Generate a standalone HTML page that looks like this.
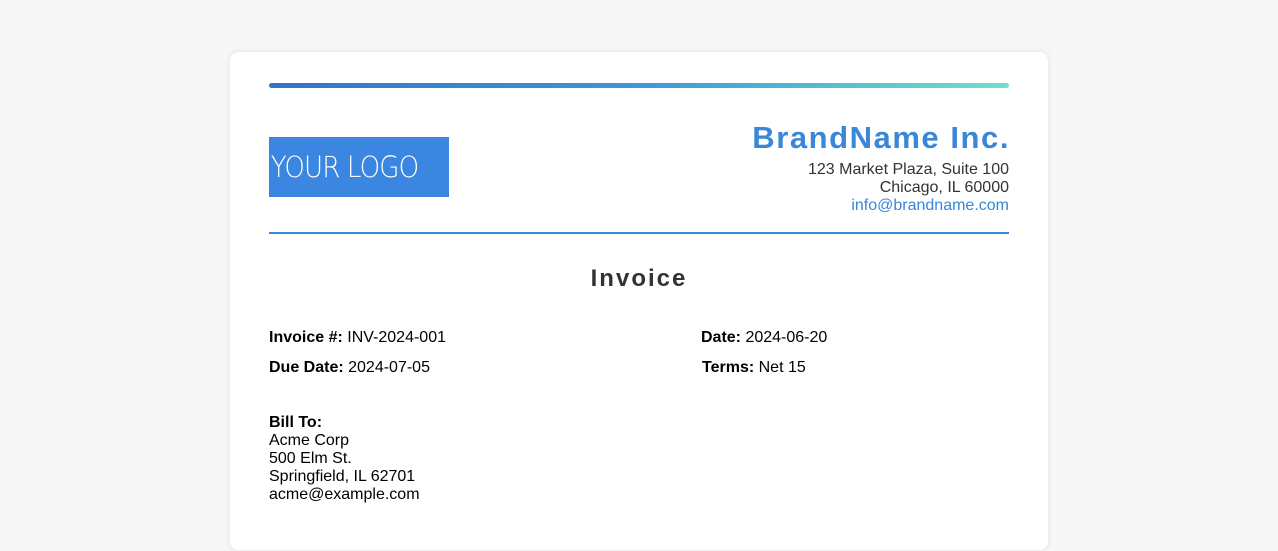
<!DOCTYPE html>
<html><head><style>
html,body{margin:0;height:501px;overflow:hidden;background:#f7f7f7;font-family:"Liberation Sans",Arial,sans-serif;}
.card{box-sizing:border-box;position:absolute;left:229px;top:51px;width:820px;height:500px;background:#fff;border-radius:10px;box-shadow:0 0 6px rgba(0,0,0,0.08);border:1px solid #eee;}
.in{position:absolute;left:39px;top:-1px;width:740px;height:100%;}
.bar{position:absolute;left:0;top:32px;width:740px;height:5px;border-radius:3px;background:linear-gradient(90deg,#3573c9,#3c98d8 50%,#6ee0cc);}
.logo{position:absolute;left:0;top:86px;width:180px;height:60px;background:#3a86e0;color:#fff;font-family:"DejaVu Sans",sans-serif;font-weight:200;font-size:29px;line-height:60px;letter-spacing:-1px;}
.logo span{display:inline-block;transform:scaleX(0.9);transform-origin:left;padding-left:2px;}
.brand{position:absolute;right:0;top:68px;text-align:right;}
.brand h1{margin:0;font-size:31px;color:#3a86d9;letter-spacing:1.55px;line-height:38px;margin-right:-1px;}
.brand div{font-size:16px;color:#333;line-height:18px;margin-top:4px;}
.brand a{color:#3a86d9;text-decoration:none;}
.hr{position:absolute;left:0;top:181px;width:740px;height:2px;background:#3a86d9;}
.title{position:absolute;left:0;width:740px;top:214px;text-align:center;font-size:24px;font-weight:bold;letter-spacing:2px;color:#333;}
.m{position:absolute;font-size:16px;color:#000;}
.bill{position:absolute;left:0;top:363px;font-size:16px;line-height:18px;color:#000;}
</style></head><body>
<div class="card"><div class="in">
<div class="bar"></div>
<div class="logo"><span>YOUR LOGO</span></div>
<div class="brand"><h1>BrandName Inc.</h1><div>123 Market Plaza, Suite 100<br>Chicago, IL 60000<br><a>info@brandname.com</a></div></div>
<div class="hr"></div>
<div class="title">Invoice</div>
<div class="m" style="left:0;top:278px"><b>Invoice #:</b> INV-2024-001</div>
<div class="m" style="left:432px;top:278px"><b>Date:</b> 2024-06-20</div>
<div class="m" style="left:0;top:308px"><b>Due Date:</b> 2024-07-05</div>
<div class="m" style="left:433px;top:308px"><b>Terms:</b> Net 15</div>
<div class="bill"><b>Bill To:</b><br>Acme Corp<br>500 Elm St.<br>Springfield, IL 62701<br>acme@example.com</div>
</div></div>
</body></html>
